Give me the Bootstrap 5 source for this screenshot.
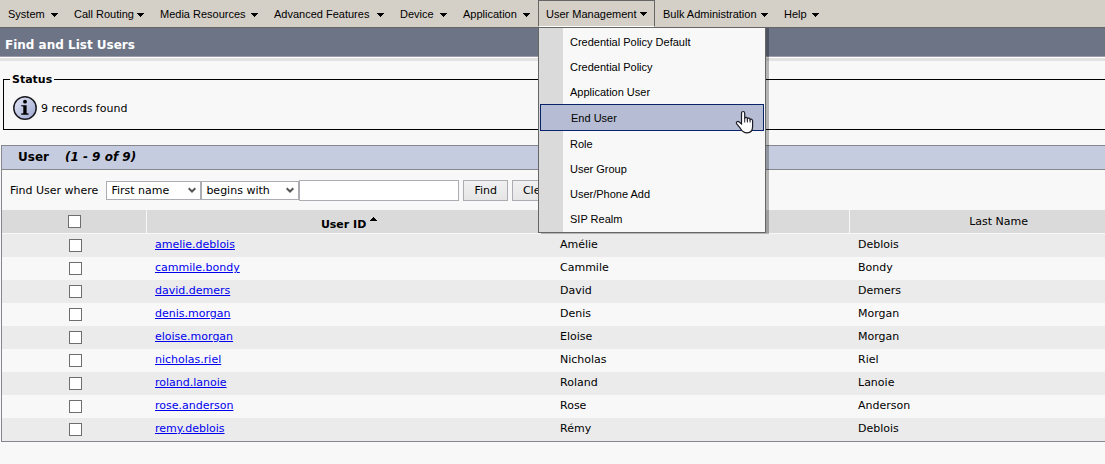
<!DOCTYPE html>
<html lang="en">
<head>
<meta charset="utf-8">
<meta name="viewport" content="width=device-width, initial-scale=1">
<title>Find and List Users</title>
<link href="https://cdn.jsdelivr.net/npm/bootstrap@5.3.0/dist/css/bootstrap.min.css" rel="stylesheet">
<style>
  body { background: #f8f8f8; color: #000; font: 11px/15px "DejaVu Sans", Verdana, sans-serif; overflow-x: hidden; }
  .menubar { background: #d4cfc7; border-bottom: 1px solid #666; font-family: "Liberation Sans", Arial, sans-serif; }
  .menubar .nav { display: grid; grid-template-columns: 66px 86px 114px 126px 63px 83px 117px 121px 51px; }
  .menubar .nav-link { display: flex; align-items: center; justify-content: space-between; width: 100%; height: 27px; padding: 1px 7px 0; border: 1px solid transparent; border-bottom: 0; border-radius: 0; background: none; color: #000; font-size: 11px; line-height: 15px; white-space: nowrap; }
  .menubar .nav-link svg { width: 7px; height: 4px; flex: none; }
  .menubar .nav-link.active { border-color: #666; border-bottom: 1px solid #fff; background: none; color: #000; }
  .menubar .dropdown-menu { top: 100%; left: 0; width: 228px; padding: 1px 0; margin: 0; border: 1px solid #666; border-radius: 0; font-size: 11px; background: linear-gradient(90deg, #dadada 24px, #f8f8f8 24px); box-shadow: 3px 1px 0 rgba(0,0,0,.27); }
  .menubar .dropdown-item { position: relative; width: auto; margin: 0 1px; padding: 6px 30px 4px; line-height: 15px; color: #000; }
  .menubar .dropdown-item.active { background: #b6bcd3; border: 1px solid #0a246a; }
  .pointer { position: absolute; right: 9px; top: 5px; width: 19px; height: 24px; }
  .titlebar { background: #6c7486; color: #fff; padding: 10px 5px 3px; border-bottom: 1px solid #9a9caa; }
  .titlebar h1, .panel-head h2 { font-size: 12px; line-height: 15px; font-weight: 700; margin: 0; }
  .rule { border-top: 1px solid #fff; border-bottom: 3px solid #e2e2e2; }
  .page-wide { width: 104%; }
  .status-box { margin: 11px 0 0 3px; border: 1px solid #000; padding: 0 9px 9px; }
  .status-box legend { font-size: 11px; line-height: 15px; font-weight: 700; padding: 0 2px; margin: -8px 0 9px -3px; }
  .panel { margin: 15px 0 0 1px; border: 1px solid #84878c; }
  .panel-head { background: #c6ccdf; border-bottom: 1px solid #84878c; padding: 4px 16px; }
  .search { padding: 10px 8px 9px; }
  .search label { margin-right: 8px; }
  .search select, .search input, .search button { border: 1px solid #abadb3; border-radius: 0; color: #000; font-size: 11px; line-height: 15px; }
  .search select { appearance: none; height: 19px; padding: 0 4px; background: #fff url("data:image/svg+xml,%3Csvg xmlns='http://www.w3.org/2000/svg' width='8' height='7'%3E%3Cpath d='M.7 1.2L4 4.5L7.3 1.2' fill='none' stroke='%23555' stroke-width='2'/%3E%3C/svg%3E") no-repeat right 4px center; }
  .search .sel-field { width: 95px; }
  .search .sel-match { width: 98px; }
  .search input { width: 160px; height: 21px; padding: 0 4px; }
  .search button { height: 21px; padding: 0 10px; margin-left: 4px; background: linear-gradient(#f0f0f0, #e6e6e6); }
  .users { table-layout: fixed; width: 100%; border-collapse: separate; border-spacing: 0; }
  .users th { height: 24px; padding: 0; background: #dadada; border: solid #f8f8f8; border-width: 0 1px 1px 0; font-size: 11px; line-height: 15px; font-weight: 400; text-align: center; vertical-align: middle; }
  .users th.sorted { font-weight: 700; padding-top: 5px; }
  .sorted svg { width: 7px; height: 4px; vertical-align: 7px; }
  .users td { height: 23px; padding: 0 8px 2px; }
  .users td.pick { padding: 0 0 0 2px; text-align: center; }
  .users tbody tr:nth-child(odd) { background: #ebebeb; }
  .users a { color: #00e; text-decoration: underline; }
  .c-pick { width: 145px; } .c-id { width: 405px; } .c-first { width: 26%; }
  .users input { appearance: none; display: block; width: 13px; height: 13px; margin: 0 auto; border: 1px solid #6e6e6e; background: #fff; }
</style>
</head>
<body>
<svg class="d-none"><symbol id="down" viewBox="0 0 7 4"><path d="M0 0H7V1H6V2H5V3H4V4H3V3H2V2H1V1H0Z"/></symbol></svg>
<nav class="menubar">
  <ul class="nav">
    <li class="nav-item"><button class="nav-link">System <svg><use href="#down"/></svg></button></li>
    <li class="nav-item"><button class="nav-link">Call Routing <svg><use href="#down"/></svg></button></li>
    <li class="nav-item"><button class="nav-link">Media Resources <svg><use href="#down"/></svg></button></li>
    <li class="nav-item"><button class="nav-link">Advanced Features <svg><use href="#down"/></svg></button></li>
    <li class="nav-item"><button class="nav-link">Device <svg><use href="#down"/></svg></button></li>
    <li class="nav-item"><button class="nav-link">Application <svg><use href="#down"/></svg></button></li>
    <li class="nav-item dropdown">
      <button class="nav-link active" aria-expanded="true">User Management <svg><use href="#down"/></svg></button>
      <div class="dropdown-menu show">
        <a class="dropdown-item" href="#">Credential Policy Default</a>
        <a class="dropdown-item" href="#">Credential Policy</a>
        <a class="dropdown-item" href="#">Application User</a>
        <a class="dropdown-item active" href="#">End User
          <svg class="pointer" viewBox="0 0 19 24"><path d="M6.5 14V3.2C6.5 .9 9.7 .9 9.7 3.2V8.5C10.2 6.9 12.4 7.2 12.4 8.8C13.2 7.5 15 8 15.1 9.6C16 8.6 17.6 9.3 17.6 11V16.5C17.6 20.5 15.4 22.8 12 22.8C8.8 22.8 7.2 21.5 5.6 18.7L1.6 13.6C.6 12 2.7 10.6 4.2 12Z" fill="#fff" stroke="#1c1c28" stroke-width="1.2"/><path d="M9.7 8V12.5M12.4 8.8V12.5M15.1 9.6V12.5" fill="none" stroke="#1c1c28"/></svg></a>
        <a class="dropdown-item" href="#">Role</a>
        <a class="dropdown-item" href="#">User Group</a>
        <a class="dropdown-item" href="#">User/Phone Add</a>
        <a class="dropdown-item" href="#">SIP Realm</a>
      </div>
    </li>
    <li class="nav-item"><button class="nav-link">Bulk Administration <svg><use href="#down"/></svg></button></li>
    <li class="nav-item"><button class="nav-link">Help <svg><use href="#down"/></svg></button></li>
  </ul>
</nav>
<header class="titlebar"><h1>Find and List Users</h1></header>
<div class="rule"></div>
<main class="page-wide">
  <fieldset class="status-box">
    <legend class="float-none w-auto">Status</legend>
    <div class="d-flex align-items-center gap-1">
      <svg width="24" height="24" viewBox="0 0 24 24">
        <defs><linearGradient id="ball" x1="0" y1="0" x2="1" y2="1"><stop offset="0" stop-color="#e4e8f6"/><stop offset="1" stop-color="#9ca6d0"/></linearGradient></defs>
        <circle cx="12" cy="12" r="11.2" fill="url(#ball)" stroke="#1b1b22" stroke-width="1.5"/>
        <circle cx="12" cy="5.7" r="1.9"/><path d="M8.2 9.2H13.6V17.2L15.6 17.6V18.8H8.2V17.6L10.3 17.2V10.6L8.2 10.3Z"/>
      </svg>
      <span>9 records found</span>
    </div>
  </fieldset>
  <section class="panel">
    <div class="panel-head d-flex gap-3"><h2>User</h2><h2 class="fst-italic">(1 - 9 of 9)</h2></div>
    <form class="search d-flex align-items-center">
      <label for="field">Find User where</label>
      <select id="field" class="sel-field"><option>First name</option></select>
      <select class="sel-match" aria-label="Match"><option>begins with</option></select>
      <input type="text" aria-label="Search text">
      <button type="button">Find</button>
      <button type="button">Clear</button>
    </form>
    <table class="users">
      <colgroup><col class="c-pick"><col class="c-id"><col class="c-first"><col></colgroup>
      <thead><tr><th><input type="checkbox" aria-label="Select all"></th><th class="sorted">User ID <svg viewBox="0 0 7 4"><path d="M0 4H7V3H6V2H5V1H4V0H3V1H2V2H1V3H0Z"/></svg></th><th>First Name</th><th>Last Name</th></tr></thead>
      <tbody>
        <tr><td class="pick"><input type="checkbox" aria-label="amelie.deblois"></td><td><a href="#">amelie.deblois</a></td><td>Amélie</td><td>Deblois</td></tr>
        <tr><td class="pick"><input type="checkbox" aria-label="cammile.bondy"></td><td><a href="#">cammile.bondy</a></td><td>Cammile</td><td>Bondy</td></tr>
        <tr><td class="pick"><input type="checkbox" aria-label="david.demers"></td><td><a href="#">david.demers</a></td><td>David</td><td>Demers</td></tr>
        <tr><td class="pick"><input type="checkbox" aria-label="denis.morgan"></td><td><a href="#">denis.morgan</a></td><td>Denis</td><td>Morgan</td></tr>
        <tr><td class="pick"><input type="checkbox" aria-label="eloise.morgan"></td><td><a href="#">eloise.morgan</a></td><td>Eloise</td><td>Morgan</td></tr>
        <tr><td class="pick"><input type="checkbox" aria-label="nicholas.riel"></td><td><a href="#">nicholas.riel</a></td><td>Nicholas</td><td>Riel</td></tr>
        <tr><td class="pick"><input type="checkbox" aria-label="roland.lanoie"></td><td><a href="#">roland.lanoie</a></td><td>Roland</td><td>Lanoie</td></tr>
        <tr><td class="pick"><input type="checkbox" aria-label="rose.anderson"></td><td><a href="#">rose.anderson</a></td><td>Rose</td><td>Anderson</td></tr>
        <tr><td class="pick"><input type="checkbox" aria-label="remy.deblois"></td><td><a href="#">remy.deblois</a></td><td>Rémy</td><td>Deblois</td></tr>
      </tbody>
    </table>
  </section>
</main>
<script src="https://cdn.jsdelivr.net/npm/bootstrap@5.3.0/dist/js/bootstrap.bundle.min.js"></script>
</body>
</html>
